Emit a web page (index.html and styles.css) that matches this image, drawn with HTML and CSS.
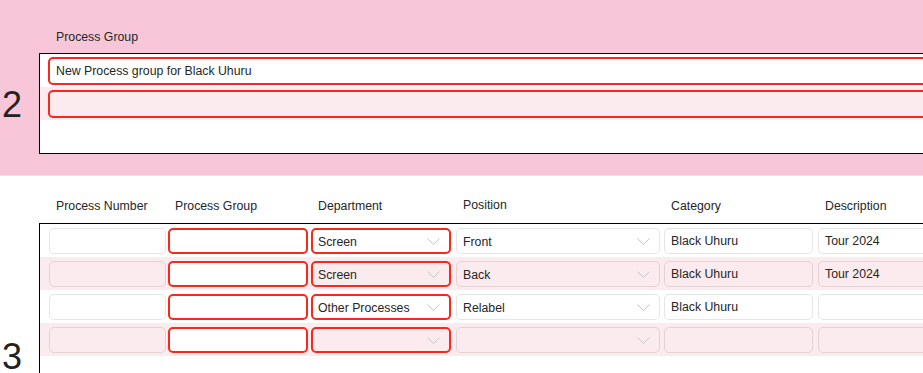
FILE: index.html
```html
<!DOCTYPE html>
<html>
<head>
<meta charset="utf-8">
<link rel="stylesheet" href="styles.css">
</head>
<body>
<section class="sec sec-group">
  <div class="label">Process Group</div>
  <div class="body-row">
    <div class="num">2</div>
    <div class="box box-group">
      <div class="grow">
        <div class="gfield">New Process group for Black Uhuru</div>
      </div>
      <div class="grow alt">
        <div class="gfield"></div>
      </div>
    </div>
  </div>
</section>

<section class="sec sec-proc">
  <div class="grid head">
    <div class="hcell">Process Number</div>
    <div class="hcell">Process Group</div>
    <div class="hcell">Department</div>
    <div class="hcell pos">Position</div>
    <div class="hcell">Category</div>
    <div class="hcell">Description</div>
  </div>
  <div class="body-row">
    <div class="num">3</div>
    <div class="box box-proc">
      <div class="grid prow">
        <div class="field c1"></div>
        <div class="field c2 err white"></div>
        <div class="field c3 err sel"><span>Screen</span><svg class="chev" width="13" height="7" viewBox="0 0 13 7"><polyline points="0.5,0.5 6.5,6.5 12.5,0.5"/></svg></div>
        <div class="field c4 sel"><span>Front</span><svg class="chev" width="13" height="7" viewBox="0 0 13 7"><polyline points="0.5,0.5 6.5,6.5 12.5,0.5"/></svg></div>
        <div class="field c5">Black Uhuru</div>
        <div class="field c6">Tour 2024</div>
      </div>
      <div class="grid prow alt">
        <div class="field c1"></div>
        <div class="field c2 err white"></div>
        <div class="field c3 err sel"><span>Screen</span><svg class="chev" width="13" height="7" viewBox="0 0 13 7"><polyline points="0.5,0.5 6.5,6.5 12.5,0.5"/></svg></div>
        <div class="field c4 sel"><span>Back</span><svg class="chev" width="13" height="7" viewBox="0 0 13 7"><polyline points="0.5,0.5 6.5,6.5 12.5,0.5"/></svg></div>
        <div class="field c5">Black Uhuru</div>
        <div class="field c6">Tour 2024</div>
      </div>
      <div class="grid prow">
        <div class="field c1"></div>
        <div class="field c2 err white"></div>
        <div class="field c3 err sel"><span>Other Processes</span><svg class="chev" width="13" height="7" viewBox="0 0 13 7"><polyline points="0.5,0.5 6.5,6.5 12.5,0.5"/></svg></div>
        <div class="field c4 sel"><span>Relabel</span><svg class="chev" width="13" height="7" viewBox="0 0 13 7"><polyline points="0.5,0.5 6.5,6.5 12.5,0.5"/></svg></div>
        <div class="field c5">Black Uhuru</div>
        <div class="field c6"></div>
      </div>
      <div class="grid prow alt">
        <div class="field c1"></div>
        <div class="field c2 err white"></div>
        <div class="field c3 err sel"><span></span><svg class="chev" width="13" height="7" viewBox="0 0 13 7"><polyline points="0.5,0.5 6.5,6.5 12.5,0.5"/></svg></div>
        <div class="field c4 sel"><span></span><svg class="chev" width="13" height="7" viewBox="0 0 13 7"><polyline points="0.5,0.5 6.5,6.5 12.5,0.5"/></svg></div>
        <div class="field c5"></div>
        <div class="field c6"></div>
      </div>
    </div>
  </div>
</section>
</body>
</html>
```

FILE: styles.css
```css
html, body {
  margin: 0;
  padding: 0;
  overflow: hidden;
  background: #ffffff;
}
body {
  font-family: "Liberation Sans", Arial, sans-serif;
  font-size: 12.3px;
  color: #262626;
  width: 1300px;
}
.sec {
  display: flex;
  flex-direction: column;
}
.sec-group {
  background: #f7c6d9;
  padding: 29px 0 21px 0;
  border-bottom: 1px solid #ebe0e5;
}
.label {
  line-height: 16px;
  padding-left: 56px;
  margin-bottom: 8px;
}
.body-row {
  display: flex;
  align-items: center;
}
.num {
  width: 37px;
  padding-left: 2px;
  padding-top: 2px;
  font-size: 36px;
  line-height: 30px;
  color: #222222;
  flex: none;
}
.box {
  flex: none;
  width: 1200px;
  border: 1px solid #000000;
  background: #ffffff;
  box-sizing: border-box;
}
.box-group {
  height: 101px;
}
.grow {
  height: 33px;
  box-sizing: border-box;
  padding: 3px 0 2px 8px;
}
.alt {
  background: #fcebee;
}
.gfield {
  height: 28px;
  width: 1150px;
  box-sizing: border-box;
  border: 2px solid #f8281c;
  border-radius: 5px;
  padding-left: 6px;
  display: flex;
  align-items: center;
  background: #ffffff;
}
.alt .gfield {
  background: transparent;
}

.sec-proc {
  padding-top: 21px;
}
.grid {
  display: grid;
  grid-template-columns: 119px 143px 145px 208px 154px 300px;
}
.head {
  margin-left: 49px;
  margin-bottom: 9px;
  line-height: 16px;
}
.hcell {
  padding-left: 7px;
  padding-top: 1px;
}
.hcell.pos {
  padding-top: 0;
}
.box-proc {
  height: 265px;
}
.prow {
  height: 33px;
  box-sizing: border-box;
  padding: 4px 0 3px 9px;
}
.field {
  height: 26px;
  box-sizing: border-box;
  border: 1px solid rgba(0, 0, 0, 0.1);
  border-radius: 5px;
  padding-left: 6px;
  display: flex;
  align-items: center;
  background: transparent;
  white-space: nowrap;
}
.prow:not(.alt) .field {
  background: #ffffff;
}
.field.err {
  border: 2px solid #f8281c;
  padding-left: 5px;
}
.field.white {
  background: #ffffff;
}
.sel {
  justify-content: space-between;
  padding-right: 9px;
}
.sel span {
  padding-top: 2px;
}
.chev {
  flex: none;
}
.chev polyline {
  fill: none;
  stroke: #c6c6c6;
  stroke-width: 1;
}
.c1 { width: 117px; }
.c2 { width: 140px; }
.c3 { width: 140px; }
.c4 { width: 204px; }
.c5 { width: 149px; }
.c6 { width: 200px; }
```
